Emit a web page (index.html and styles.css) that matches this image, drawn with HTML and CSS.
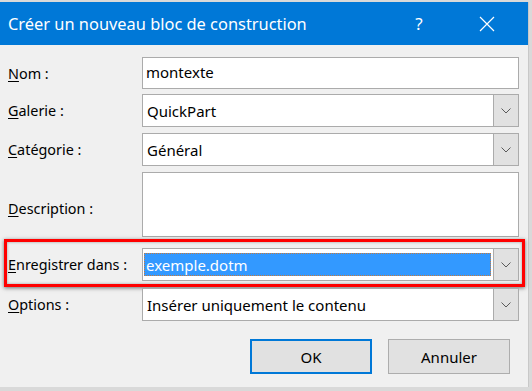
FILE: index.html
```html
<!DOCTYPE html>
<html lang="fr">
<head>
<meta charset="utf-8">
<title>Créer un nouveau bloc de construction</title>
<link rel="stylesheet" href="styles.css">
</head>
<body>
<div class="dialog">
  <div class="titlebar">
    <span class="title">Créer un nouveau bloc de construction</span>
    <span class="help">?</span>
    <span class="close">
      <svg width="16" height="16" viewBox="0 0 16 16"><path d="M1 1 L15 15 M15 1 L1 15" stroke="#fff" stroke-width="1.2" fill="none"/></svg>
    </span>
  </div>
  <div class="body">
    <div class="row r-nom">
      <label class="lbl"><u>N</u>om :</label>
      <div class="field"><span class="val">montexte</span></div>
    </div>
    <div class="row r-gal">
      <label class="lbl"><u>G</u>alerie :</label>
      <div class="field combo"><span class="val">QuickPart</span><span class="btn"><svg width="10" height="6" viewBox="0 0 10 6"><path d="M0.5 0.5 L5 5 L9.5 0.5" stroke="#5a5a5a" stroke-width="1" fill="none"/></svg></span></div>
    </div>
    <div class="row r-cat">
      <label class="lbl"><u>C</u>atégorie :</label>
      <div class="field combo"><span class="val">Général</span><span class="btn"><svg width="10" height="6" viewBox="0 0 10 6"><path d="M0.5 0.5 L5 5 L9.5 0.5" stroke="#5a5a5a" stroke-width="1" fill="none"/></svg></span></div>
    </div>
    <div class="row r-desc">
      <label class="lbl"><u>D</u>escription :</label>
      <div class="field area"></div>
    </div>
    <div class="row r-enr highlight">
      <label class="lbl"><u>E</u>nregistrer dans :</label>
      <div class="field combo"><span class="sel">exemple.dotm</span><span class="btn"><svg width="10" height="6" viewBox="0 0 10 6"><path d="M0.5 0.5 L5 5 L9.5 0.5" stroke="#5a5a5a" stroke-width="1" fill="none"/></svg></span></div>
    </div>
    <div class="row r-opt">
      <label class="lbl"><u>O</u>ptions :</label>
      <div class="field combo"><span class="val">Insérer uniquement le contenu</span><span class="btn"><svg width="10" height="6" viewBox="0 0 10 6"><path d="M0.5 0.5 L5 5 L9.5 0.5" stroke="#5a5a5a" stroke-width="1" fill="none"/></svg></span></div>
    </div>
    <div class="buttons">
      <button class="pb ok">OK</button>
      <button class="pb">Annuler</button>
    </div>
  </div>
</div>
</body>
</html>
```

FILE: styles.css
```css
html, body {
  margin: 0;
  padding: 0;
}
body {
  width: 532px;
  height: 391px;
  background: #d9d9d9;
  font-family: "Noto Sans", "Open Sans", sans-serif;
  overflow: hidden;
}
.dialog {
  margin-top: 2px;
  width: 529px;
  height: 385px;
  background: #f0f0f0;
  border-right: 1px solid #c8c8c8;
  box-sizing: border-box;
  display: flex;
  flex-direction: column;
}
.titlebar {
  height: 43px;
  background: #0078d7;
  color: #fff;
  display: flex;
  align-items: center;
  padding-left: 8px;
}
.title {
  font-size: 16.4px;
  flex: 1;
}
.help {
  font-size: 17px;
  width: 20px;
  margin-right: 50px;
  text-align: center;
}
.close {
  width: 16px;
  height: 16px;
  margin-right: 33px;
  display: flex;
}
.body {
  padding: 12px 9px 0 0;
  display: flex;
  flex-direction: column;
}
.row {
  display: flex;
  align-items: center;
  position: relative;
}
.lbl {
  width: 142px;
  padding-left: 8px;
  box-sizing: border-box;
  font-size: 14.4px;
  color: #000;
}
.lbl u {
  text-decoration-thickness: 1px;
  text-underline-offset: 2px;
}
.field {
  flex: 1;
  height: 33px;
  background: #fff;
  border: 1px solid #ababab;
  box-sizing: border-box;
  display: flex;
  align-items: center;
  font-size: 15px;
  color: #000;
}
.val {
  flex: 1;
  padding-left: 4px;
}
.r-nom .field { height: 32px; }
.r-nom .val { padding-left: 3px; margin-top: -2px; }
.r-gal { margin-top: 5px; }
.r-cat { margin-top: 6px; }
.r-desc { margin-top: 6px; }
.r-desc .field { height: 65px; }
.r-desc .lbl { margin-top: 8px; }
.r-enr { margin-top: 11px; }
.r-opt { margin-top: 7px; }
.btn {
  width: 25px;
  height: 100%;
  background: #e1e1e1;
  border-left: 1px solid #ababab;
  box-sizing: border-box;
  display: flex;
  align-items: center;
  justify-content: center;
}
.sel {
  flex: 1;
  margin: 0 2px 0 1px;
  height: 21px;
  background: #3399ff;
  color: #fff;
  border: 1px dotted #c87a3a;
  display: flex;
  align-items: center;
  padding-left: 1px;
}
.highlight::after {
  content: "";
  position: absolute;
  left: 4px;
  right: -6px;
  top: -9px;
  bottom: -6px;
  border: 3px solid #ff0000;
  box-shadow: 0 1px 4px rgba(0,0,0,0.55), inset 0 0 3px rgba(0,0,0,0.35);
  pointer-events: none;
}
.buttons {
  display: flex;
  justify-content: flex-end;
  gap: 16px;
  margin-top: 18px;
  padding-right: 9px;
}
.pb {
  flex: none;
  width: 122px;
  height: 35px;
  background: #e1e1e1;
  border: 1px solid #adadad;
  font-family: "Noto Sans", "Open Sans", sans-serif;
  font-size: 15px;
  color: #000;
  padding: 0;
}
.pb.ok {
  border: 2px solid #0078d7;
}
```
